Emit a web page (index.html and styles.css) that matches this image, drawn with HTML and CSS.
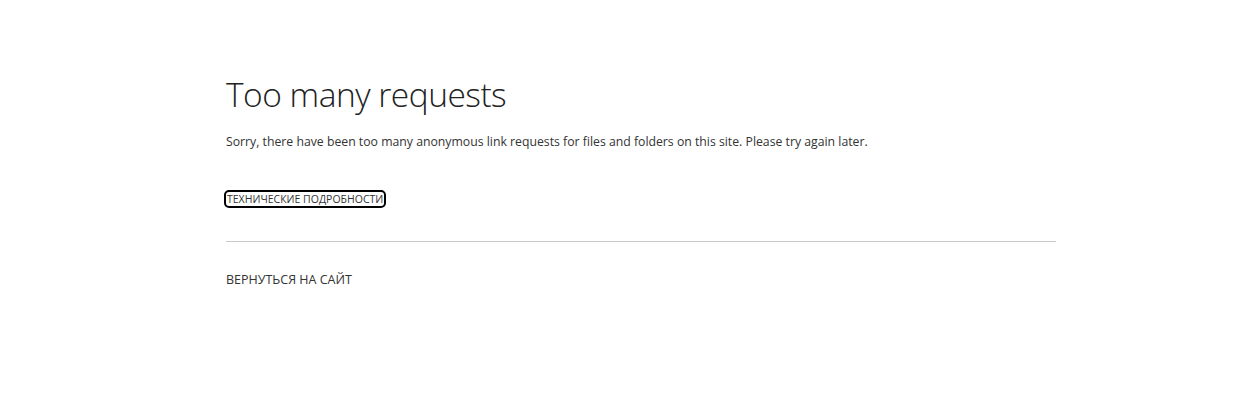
FILE: index.html
```html
<!DOCTYPE html>
<html lang="ru">
<head>
<meta charset="utf-8">
<title>Too many requests</title>
<link rel="stylesheet" href="styles.css">
</head>
<body>
<main class="page">
  <h1 class="title">Too many requests</h1>
  <p class="message">Sorry, there have been too many anonymous link requests for files and folders on this site. Please try again later.</p>
  <div class="details-row">
    <a class="details" href="#">ТЕХНИЧЕСКИЕ ПОДРОБНОСТИ</a>
  </div>
  <hr class="divider">
  <a class="back" href="#">ВЕРНУТЬСЯ НА САЙТ</a>
</main>
</body>
</html>
```

FILE: styles.css
```css
html, body {
  margin: 0;
  padding: 0;
  background: #fff;
}
body {
  font-family: "Open Sans", "Liberation Sans", sans-serif;
  color: #333;
}
.page {
  width: 830px;
  margin-left: 226px;
  padding-top: 72px;
}
.title {
  margin: 0;
  font-weight: 300;
  font-size: 33.5px;
  line-height: 44px;
  color: #222;
  letter-spacing: -0.5px;
}
.message {
  margin: 17px 0 0;
  font-size: 12.25px;
  line-height: 18px;
  color: #333;
}
.details-row {
  margin-top: 41px;
  display: flex;
}
.details {
  display: inline-block;
  font-size: 10.5px;
  line-height: 14px;
  color: #333;
  text-decoration: none;
  padding: 0 1px;
  outline: 2px solid #000;
  outline-offset: 0;
  border-radius: 3px;
}
.divider {
  margin: 35px 0 0;
  border: 0;
  border-top: 1px solid #c8c8c8;
  height: 0;
}
.back {
  display: inline-block;
  margin-top: 29px;
  font-size: 12.5px;
  line-height: 18px;
  color: #333;
  text-decoration: none;
}
```
